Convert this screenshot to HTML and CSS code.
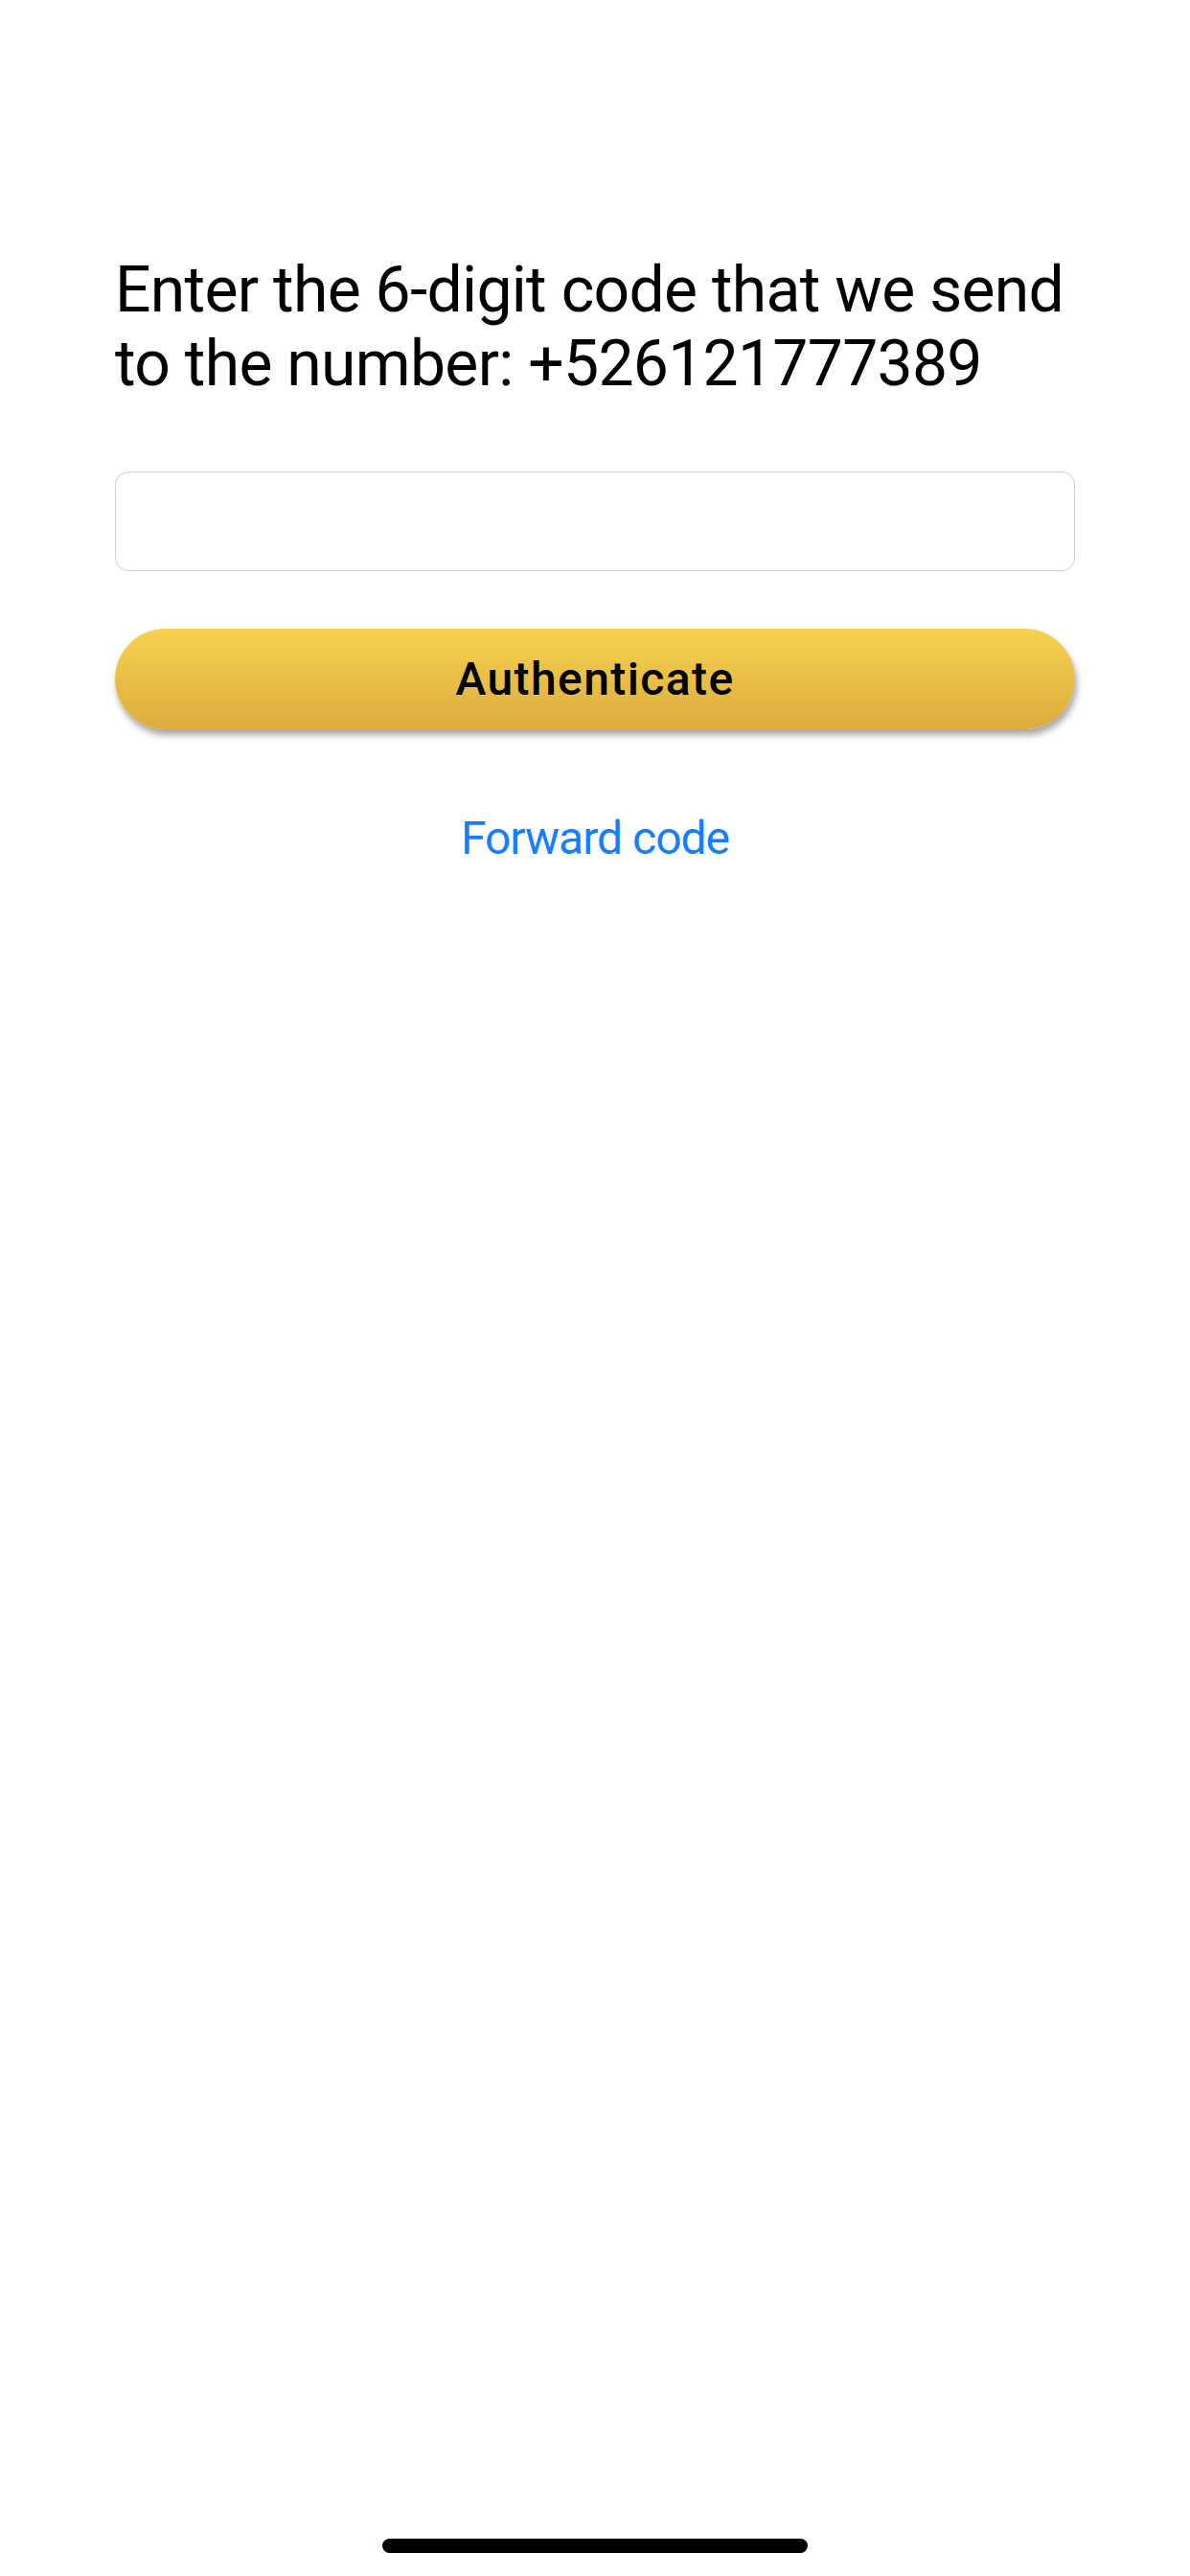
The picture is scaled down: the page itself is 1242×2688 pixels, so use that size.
FILE: index.html
```html
<!DOCTYPE html>
<html lang="en">
<head>
<meta charset="utf-8">
<title>Authenticate</title>
<link rel="stylesheet" href="styles.css">
</head>
<body>
<main class="screen">
  <h1 class="title">Enter the 6-digit code that we send to the number: +526121777389</h1>
  <div class="code-input"></div>
  <button class="auth-btn" type="button">Authenticate</button>
  <a class="forward" href="#">Forward code</a>
</main>
<div class="home-indicator"></div>
</body>
</html>
```
FILE: styles.css
```css
html, body {
  margin: 0;
  padding: 0;
  background: #ffffff;
}
body {
  width: 1242px;
  height: 2688px;
  position: relative;
  font-family: Roboto, "Noto Sans", sans-serif;
  overflow: hidden;
}
.screen {
  display: flex;
  flex-direction: column;
  padding: 264px 120px 0 120px;
}
.title {
  margin: 0;
  font-size: 66px;
  font-weight: 400;
  line-height: 77px;
  letter-spacing: -0.7px;
  color: #000;
}
.code-input {
  margin-top: 74px;
  height: 102px;
  border: 1.5px solid #cfcfd2;
  border-radius: 14px;
  background: #fff;
}
.auth-btn {
  margin-top: 60px;
  height: 105px;
  border: none;
  border-radius: 53px;
  background: linear-gradient(to bottom, #f6d24f 0%, #dcac3f 100%);
  box-shadow: 2px 6px 7px rgba(0, 0, 0, 0.35);
  font-family: Roboto, "Noto Sans", sans-serif;
  font-size: 48px;
  font-weight: 500;
  letter-spacing: 1.4px;
  color: #000;
  padding: 0;
}
.forward {
  margin-top: 85px;
  align-self: center;
  font-size: 48px;
  line-height: 58px;
  color: #147efb;
  text-decoration: none;
  letter-spacing: -1px;
}
.home-indicator {
  position: absolute;
  left: 399px;
  top: 2649px;
  width: 444px;
  height: 15px;
  border-radius: 8px;
  background: #000;
}
```
